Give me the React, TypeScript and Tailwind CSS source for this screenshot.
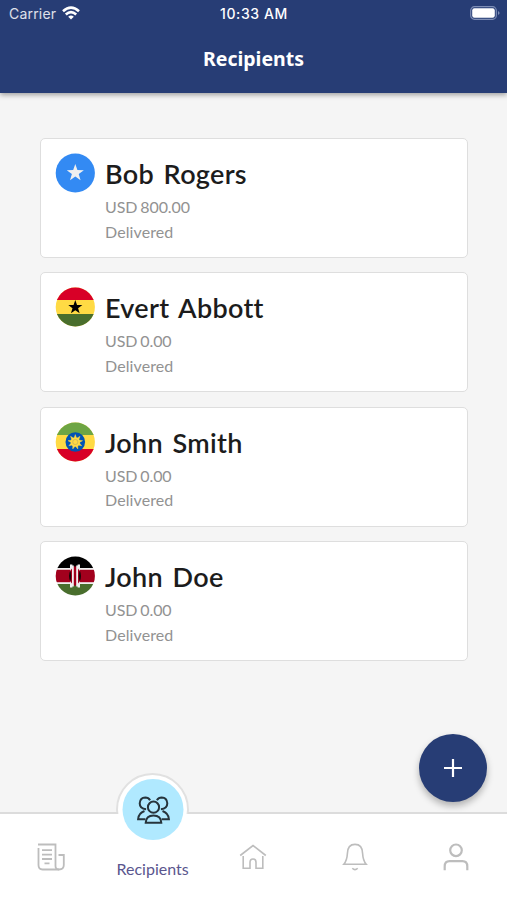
import type { ReactNode } from "react"
import { clsx } from "clsx"

const STAR = "M0 -1 L0.235 -0.324 L0.951 -0.309 L0.38 0.124 L0.588 0.809 L0 0.4 L-0.588 0.809 L-0.38 0.124 L-0.951 -0.309 L-0.235 -0.324 Z"

function Flag({ id, children }: { id: string; children: ReactNode }) {
  return (
    <svg viewBox="0 0 40 40" className="h-10 w-10 shrink-0">
      <clipPath id={id}>
        <circle cx="20.3" cy="20" r="19.6" />
      </clipPath>
      <g clipPath={`url(#${id})`}>{children}</g>
    </svg>
  )
}

function DefaultFlag() {
  return (
    <Flag id="flag-default">
      <rect width="40" height="40" fill="#338af3" />
      <path d={STAR} transform="translate(20.3 20) scale(9)" fill="#f0f0f0" />
    </Flag>
  )
}

function GhanaFlag() {
  return (
    <Flag id="flag-gh">
      <rect width="40" height="40" fill="#ffda44" />
      <rect width="40" height="13" fill="#d80027" />
      <rect y="27" width="40" height="13" fill="#496e2d" />
      <path d={STAR} transform="translate(20.3 20.3) scale(7.4)" fill="#000" />
    </Flag>
  )
}

function EthiopiaFlag() {
  return (
    <Flag id="flag-et">
      <rect width="40" height="40" fill="#ffda44" />
      <rect width="40" height="13" fill="#6da544" />
      <rect y="27" width="40" height="13" fill="#d80027" />
      <circle cx="20.3" cy="20" r="9.8" fill="#0052b4" />
      <circle cx="20.3" cy="20" r="4.6" fill="#ffda44" />
      {[0, 40, 80, 120, 160, 200, 240, 280, 320].map((angle) => (
        <path key={angle} d="M18.9 16.5 L20.3 12.6 L21.7 16.5 Z" fill="#ffda44" stroke="#ffda44" strokeWidth="0.4" transform={`rotate(${angle} 20.3 20)`} />
      ))}
      <circle cx="20.3" cy="20" r="2.6" fill="none" stroke="#b5a765" strokeWidth="0.6" />
    </Flag>
  )
}

function KenyaFlag() {
  return (
    <Flag id="flag-ke">
      <rect width="40" height="40" fill="#f0f0f0" />
      <rect width="40" height="12" fill="#000" />
      <rect y="28" width="40" height="12" fill="#496e2d" />
      <rect y="13.8" width="40" height="12.4" fill="#a2001d" />
      <path d="M15 8.5 h2.4 v4 q2.6 7.5 0 15 v4 h-2.4 v-4 q2 -7.5 0 -15 Z" fill="#f0f0f0" />
      <path d="M25 8.5 h-2.4 v4 q-2.6 7.5 0 15 v4 h2.4 v-4 q-2 -7.5 0 -15 Z" fill="#f0f0f0" />
      <path d="M20 10 Q25.8 13.5 25.8 20 T20 30 Q14.2 26.5 14.2 20 T20 10 Z" fill="#a2001d" />
      <path d="M15.2 14.5 Q17.2 20 15.2 25.5 Q12.8 20 15.2 14.5 Z M24.8 14.5 Q22.8 20 24.8 25.5 Q27.2 20 24.8 14.5 Z" fill="#1a0508" />
      <path d="M17.9 9.5 V30.5 M22.1 9.5 V30.5" stroke="#f0f0f0" strokeWidth="1.8" />
    </Flag>
  )
}

const recipients = [
  { name: "Bob  Rogers", amount: "USD 800.00", status: "Delivered", flag: <DefaultFlag /> },
  { name: "Evert  Abbott", amount: "USD 0.00", status: "Delivered", flag: <GhanaFlag /> },
  { name: "John  Smith", amount: "USD 0.00", status: "Delivered", flag: <EthiopiaFlag /> },
  { name: "John  Doe", amount: "USD 0.00", status: "Delivered", flag: <KenyaFlag /> },
]

function StatusBar() {
  return (
    <div className="grid h-[26px] grid-cols-[1fr_auto_1fr] items-center pr-[6px] pl-[9px] font-['Inter',sans-serif] text-white">
      <div className="flex items-center gap-[6px] text-[14px] tracking-[0.2px] text-white/85">
        Carrier
        <svg viewBox="0 0 18 14" className="h-[14px] w-[18px]" fill="none" stroke="#fff" strokeWidth="2.6">
          <path d="M1 5.2 Q9 -2 17 5.2" />
          <path d="M3.8 8.5 Q9 3.9 14.2 8.5" />
          <path d="M6.2 10.7 Q9 8.4 11.8 10.7 L9 13.6 Z" fill="#fff" stroke="none" />
        </svg>
      </div>
      <span className="pr-[2px] text-[14px] font-medium tracking-[0.6px] whitespace-nowrap">10:33 AM</span>
      <svg viewBox="0 0 31 14" className="h-[14px] w-[31px] justify-self-end" fill="none">
        <rect x="0.7" y="0.7" width="25.6" height="12.6" rx="3.8" stroke="#7e8eb6" strokeWidth="1.2" />
        <rect x="2.2" y="2.2" width="22.6" height="9.6" rx="2.2" fill="#fff" />
        <path d="M28 5 Q29.6 5.8 29.6 7 T28 9 Z" fill="#7e8eb6" />
      </svg>
    </div>
  )
}

function RecipientCard({ name, amount, status, flag }: (typeof recipients)[number]) {
  return (
    <li className="flex h-[120px] gap-[10px] rounded-[5px] border-[1.5px] border-[#dedede] bg-white pt-[14px] pl-[14px]">
      {flag}
      <div className="pt-[3px]">
        <h2 className="text-[27px] leading-[36px] font-semibold tracking-[0.3px] [word-spacing:-2.2px] whitespace-pre text-[#1c1c1c] [font-variant-ligatures:none]">{name}</h2>
        <p className="pt-[3px] text-[16px] leading-[24.5px] tracking-[-0.1px] [word-spacing:-1px] text-[#929292]">{amount}</p>
        <p className="text-[16px] leading-[24.5px] tracking-[0.1px] text-[#929292]">{status}</p>
      </div>
    </li>
  )
}

function NewsIcon() {
  return (
    <svg viewBox="0 0 28 28" className="h-7 w-7" fill="none" stroke="currentColor" strokeWidth="1.8">
      <path d="M1 1.5 H18.5 V23 Q18.5 26.5 22 26.5 Q26.8 26.5 26.8 22 V12 H21.5" />
      <path d="M1.5 5 V22 Q1.5 26.5 5.5 26.5 H22" />
      <path d="M5 7.2 H15 M5 11.6 H15 M5 16 H15 M7.5 20.3 H12.5" />
    </svg>
  )
}

function PeopleIcon() {
  return (
    <svg viewBox="0 0 34 28" className="h-7 w-[34px]" fill="none" stroke="currentColor" strokeWidth="2">
      <circle cx="17" cy="11.2" r="5.6" />
      <path d="M8.8 23.2 H1.6 Q2 17.2 8 15 M9.6 13.2 Q3.2 12.6 3.2 7.2 Q3.6 1.6 8.8 1.4 Q12 1.4 13.6 4.2" />
      <path d="M25.2 23.2 H32.4 Q32 17.2 26 15 M24.4 13.2 Q30.8 12.6 30.8 7.2 Q30.4 1.6 25.2 1.4 Q22 1.4 20.4 4.2" />
      <path d="M9.2 26.8 Q9.6 19.6 17 19.6 T24.8 26.8 Z" />
    </svg>
  )
}

function HomeIcon() {
  return (
    <svg viewBox="0 0 28 26" className="h-[26px] w-7" fill="none" stroke="currentColor" strokeWidth="1.6">
      <path d="M1.2 11.5 L14 1.5 L26.8 11.5" />
      <path d="M4.2 12 V24.3 H11 V18.5 Q11 15 14 15 T17 18.5 V24.3 H23.8 V12" />
    </svg>
  )
}

function BellIcon() {
  return (
    <svg viewBox="0 0 26 28" className="h-7 w-[26px]" fill="none" stroke="currentColor" strokeWidth="1.6">
      <path d="M1.8 21.3 Q5 17.5 5.4 10.5 Q5.6 1.4 13 1.4 T20.6 10.5 Q21 17.5 24.2 21.3 Z" />
      <path d="M10.3 25.2 Q13 28 15.7 25.2" />
    </svg>
  )
}

function PersonIcon() {
  return (
    <svg viewBox="0 0 26 28" className="h-7 w-[26px]" fill="none" stroke="currentColor" strokeWidth="2.2">
      <circle cx="13" cy="7.3" r="5.8" />
      <path d="M1.7 27.2 V23.5 Q1.7 18.2 6.6 18.2 H19.4 Q24.3 18.2 24.3 23.5 V27.2" />
    </svg>
  )
}

function NavItem({ className, children }: { className?: string; children: ReactNode }) {
  return (
    <button type="button" className={clsx("flex items-center justify-center text-[#bdbdbd]", className)}>
      {children}
    </button>
  )
}

function BottomNav() {
  return (
    <nav className="relative h-[86px]">
      <div className="absolute -top-[41px] left-[116px] h-[73px] w-[73px] rounded-full border-[2px] border-[#e1e1e1] bg-white" />
      <div className="relative h-full">
        <div className="pointer-events-none absolute inset-x-0 -top-[2px] flex h-[2px] gap-[70px]">
          <div className="w-[118px] bg-[#dcdcdc]" />
          <div className="flex-1 bg-[#dcdcdc]" />
        </div>
        <div className="grid h-full grid-cols-5 bg-white">
          <NavItem>
            <NewsIcon />
          </NavItem>
          <button type="button" className="relative flex items-end justify-center pb-[19px] pl-[1px] text-[16px] leading-6 text-[#5a568e]">
            <span className="absolute -top-[35px] left-[calc(50%+1px)] flex h-[61px] w-[61px] -translate-x-1/2 items-center justify-center rounded-full bg-[#b0e9ff] text-[#26343c]">
              <PeopleIcon />
            </span>
            Recipients
          </button>
          <NavItem>
            <HomeIcon />
          </NavItem>
          <NavItem>
            <BellIcon />
          </NavItem>
          <NavItem>
            <PersonIcon />
          </NavItem>
        </div>
      </div>
    </nav>
  )
}

export default function App() {
  return (
    <div className="relative flex h-[900px] w-[507px] flex-col overflow-hidden bg-[#f5f5f5] font-['Lato',sans-serif]">
      <header className="mb-px h-[93px] shrink-0 bg-[#273d75] shadow-[0_2px_5px_rgba(0,0,0,0.35)]">
        <StatusBar />
        <h1 className="pt-[18px] text-center font-['Noto_Sans',sans-serif] text-[19.5px] leading-[30px] font-bold text-white">Recipients</h1>
      </header>

      <main className="flex-1 pt-11 pr-[39px] pl-10">
        <ul className="flex flex-col gap-[14.4px]">
          {recipients.map((recipient) => (
            <RecipientCard key={recipient.name} {...recipient} />
          ))}
        </ul>
      </main>

      <button
        type="button"
        aria-label="Add recipient"
        className="absolute top-[734px] left-[419px] flex h-[68px] w-[68px] items-center justify-center rounded-full bg-[#273d75] shadow-[0_4px_7px_rgba(0,0,0,0.28)]"
      >
        <svg viewBox="0 0 18 18" className="h-[18px] w-[18px]" stroke="#fff" strokeWidth="2.2">
          <path d="M9 0 V18 M0 9 H18" />
        </svg>
      </button>

      <BottomNav />
    </div>
  )
}
